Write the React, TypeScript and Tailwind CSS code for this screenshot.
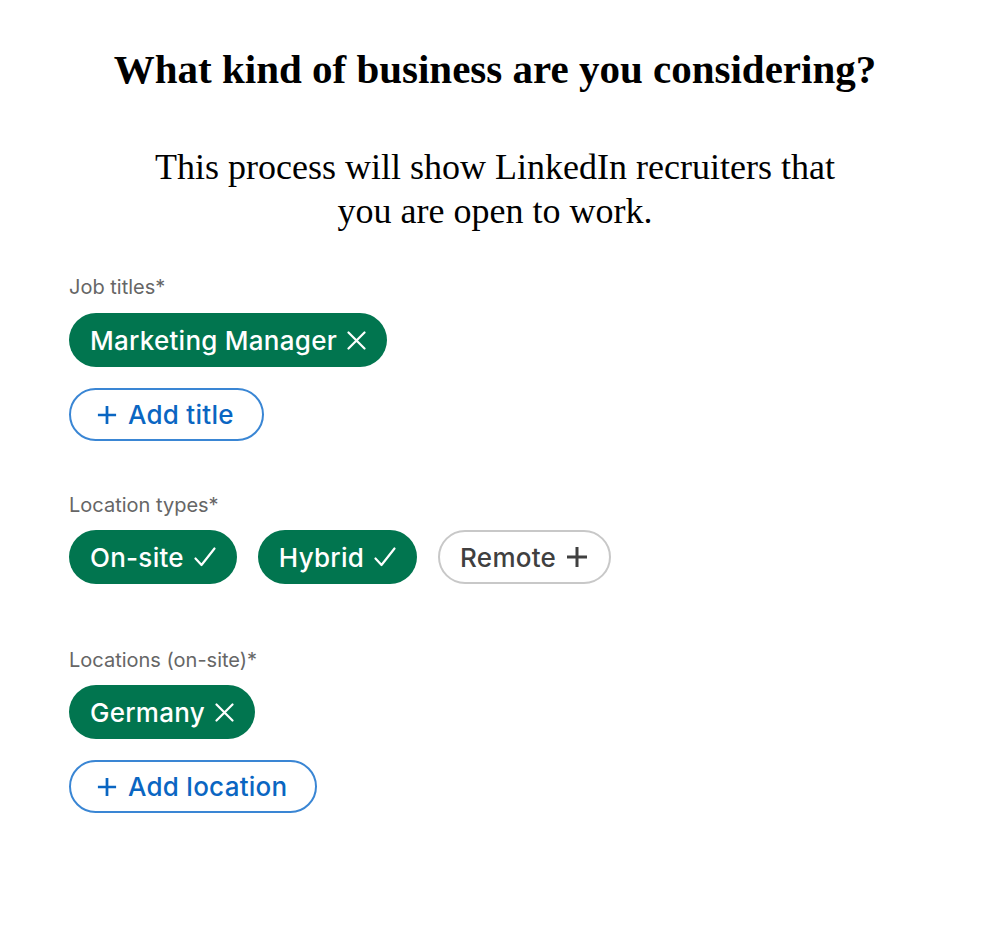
const sans = { fontFamily: 'Inter, Roboto, "Noto Sans", sans-serif' };

function XIcon() {
  return (
    <svg width="19" height="19" viewBox="0 0 19 19" fill="none" stroke="currentColor" strokeWidth="2.2" strokeLinecap="round">
      <path d="M1.5 1.5 17.5 17.5M17.5 1.5 1.5 17.5" />
    </svg>
  );
}

function CheckIcon() {
  return (
    <svg width="22" height="20" viewBox="0 0 22 20" fill="none" stroke="currentColor" strokeWidth="2.2" strokeLinecap="round" strokeLinejoin="round">
      <path d="M1.5 11.5 7.5 18 20.5 1.5" />
    </svg>
  );
}

function PlusIcon({ size }: { size: number }) {
  return (
    <svg width={size} height={size} viewBox="0 0 22 22" fill="none" stroke="currentColor" strokeWidth="3" strokeLinecap="butt">
      <path d="M11 1v20M1 11h20" />
    </svg>
  );
}

function Label({ children }: { children: React.ReactNode }) {
  return <div className="text-[20px] leading-[24px] text-[#666666]">{children}</div>;
}

function GreenChip({ label, icon }: { label: string; icon: 'x' | 'check' }) {
  return (
    <div className="flex h-[54px] items-center gap-[10px] rounded-full bg-[#01754f] pl-[21px] pr-[21px] text-[26px] font-medium tracking-[0.01em] text-white">
      <span>{label}</span>
      {icon === 'x' ? <XIcon /> : <CheckIcon />}
    </div>
  );
}

function AddButton({ label }: { label: string }) {
  return (
    <div className="flex h-[53px] items-center gap-[11px] self-start rounded-full border-2 border-[#3a86d4] pl-[26px] pr-[28px] text-[26px] font-medium tracking-[0.01em] text-[#0a66c2]">
      <PlusIcon size={20} />
      <span>{label}</span>
    </div>
  );
}

export default function App() {
  return (
    <div className="min-h-[926px] w-[1002px] bg-white">
      <div className="flex flex-col items-center pr-[12px] pt-[45px]" style={{ fontFamily: '"Liberation Serif", serif' }}>
        <h1 className="text-[41px] font-bold leading-[48px] text-black">What kind of business are you considering?</h1>
        <p className="mt-[52px] w-[740px] text-center text-[36px] leading-[44px] text-black">
          This process will show LinkedIn recruiters that you are open to work.
        </p>
      </div>

      <div className="flex flex-col pl-[69px]" style={sans}>
        <div className="mt-[42px]">
          <Label>Job titles*</Label>
        </div>
        <div className="mt-[14px] flex">
          <GreenChip label="Marketing Manager" icon="x" />
        </div>
        <div className="mt-[21px] flex">
          <AddButton label="Add title" />
        </div>

        <div className="mt-[52px]">
          <Label>Location types*</Label>
        </div>
        <div className="mt-[13px] flex gap-[21px]">
          <GreenChip label="On-site" icon="check" />
          <GreenChip label="Hybrid" icon="check" />
          <div className="flex h-[54px] items-center gap-[10px] rounded-full border-2 border-[#c8c8c8] pl-[20px] pr-[21px] text-[26px] font-medium tracking-[0.01em] text-[#404040]">
            <span>Remote</span>
            <PlusIcon size={22} />
          </div>
        </div>

        <div className="mt-[64px]">
          <Label>Locations (on-site)*</Label>
        </div>
        <div className="mt-[13px] flex">
          <GreenChip label="Germany" icon="x" />
        </div>
        <div className="mt-[21px] flex">
          <AddButton label="Add location" />
        </div>
      </div>
    </div>
  );
}
